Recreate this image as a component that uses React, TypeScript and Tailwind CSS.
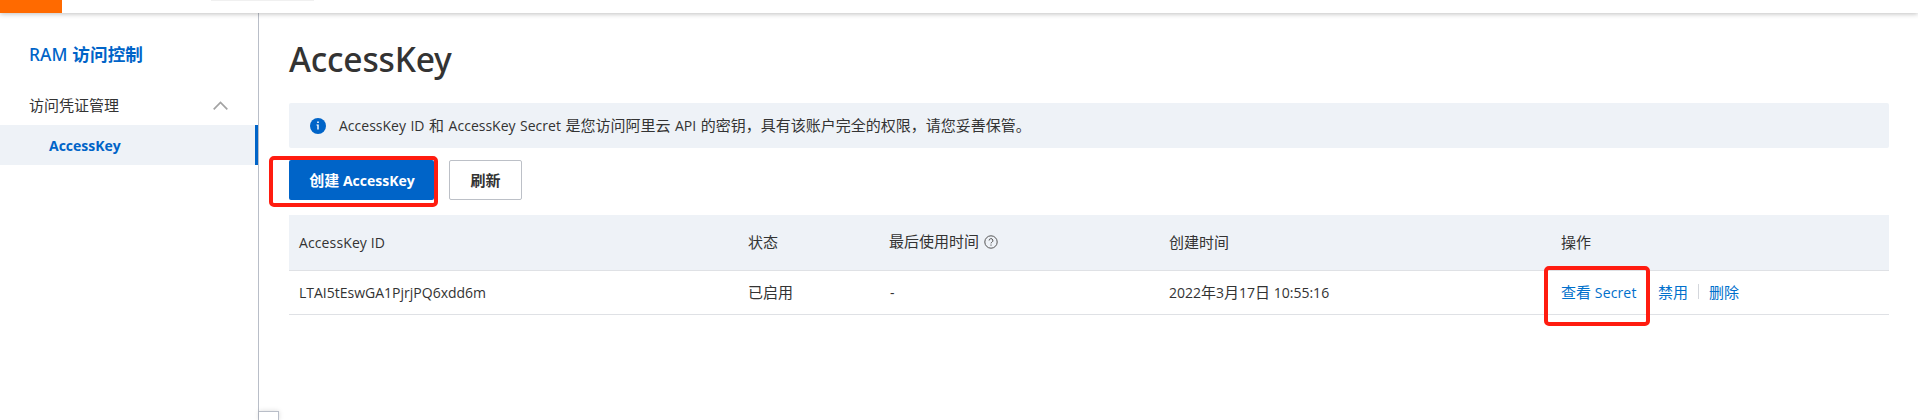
import type { ReactNode } from "react";

function L({
  children,
  className = "text-[14px]",
  family = "font-['Open_Sans','Noto_Sans',sans-serif]",
}: {
  children: ReactNode;
  className?: string;
  family?: string;
}) {
  return <span className={`${family} leading-none whitespace-pre ${className}`}>{children}</span>;
}

const heading = "font-['Noto_Sans','Open_Sans',sans-serif]";

function Sidebar() {
  return (
    <aside className="w-[259px] shrink-0 border-r border-[#b9bec8]">
      <h2 className="mt-[29px] ml-[29px] flex h-[24px] items-baseline text-[17.6px] leading-[24px] font-bold tracking-[0.1px] text-[#0064c8]">
        <L family={heading} className="text-[17.4px] font-medium">RAM </L>
        <span>访问控制</span>
      </h2>
      <div className="mt-[19px] flex h-[40px] items-center justify-between pr-[30px] pl-[29px]">
        <span>访问凭证管理</span>
        <svg width="15" height="9" viewBox="0 0 15 9" fill="none" stroke="#a3a3a3" strokeWidth="1.7">
          <path d="M0.7 8.3 7.5 1.4l6.8 6.9" />
        </svg>
      </div>
      <div className="flex h-[40px] items-center border-r-[3px] border-[#0064c8] bg-[#eef2f7] pt-[2px] pl-[49px] font-bold text-[#0064c8]">
        <L>AccessKey</L>
      </div>
    </aside>
  );
}

function Table() {
  const row = "grid grid-cols-[449px_141px_280px_392px_1fr] pl-[10px] border-b border-[#dfe1e5] items-center";
  return (
    <div className="mt-[15px]">
      <div className={`${row} h-[56px] bg-[#eef2f7]`}>
        <L className="text-[14px] tracking-[0.12px]">AccessKey ID</L>
        <span className="pb-[2px]">状态</span>
        <span className="flex items-center gap-[5px] pb-[3px]">
          最后使用时间
          <svg className="mt-[2px]" width="14" height="14" viewBox="0 0 14 14" fill="none" stroke="#555" strokeWidth="1">
            <circle cx="7" cy="7" r="6.2" />
            <path d="M5.1 5.5a1.9 1.9 0 1 1 2.8 1.7c-.6.3-.9.6-.9 1.2M7 9.5v1.2" />
          </svg>
        </span>
        <span className="pb-[2px]">创建时间</span>
        <span className="pb-[2px]">操作</span>
      </div>
      <div className={`${row} h-[44px]`}>
        <L>LTAI5tEswGA1PjrjPQ6xdd6m</L>
        <span className="pb-[2px]">已启用</span>
        <L className="pl-px text-[14px]">-</L>
        <span className="pb-[2px]"><L>2022</L>年<L>3</L>月<L>17</L>日<L> 10:55:16</L></span>
        <span className="flex items-center pb-[2px] text-[#0070cc]">
          <span className="relative w-[97px]">
            查看<L className="text-[14px] tracking-[0.15px]"> Secret</L>
            <span className="absolute top-[-15px] left-[-17px] h-[60px] w-[106px] rounded-[5px] border-4 border-[#ff1c10]" />
          </span>
          <span>禁用</span>
          <span className="mx-[10px] h-[15px] w-px bg-[#d4d7dc]" />
          <span>删除</span>
        </span>
      </div>
    </div>
  );
}

export default function App() {
  return (
    <div className="flex h-[420px] w-[1918px] flex-col overflow-hidden bg-white font-['Noto_Sans_CJK_SC',sans-serif] text-[15px] leading-[22px] text-[#333]">
      <header className="relative z-10 flex h-[13px] shrink-0 bg-white shadow-[0_1px_5px_rgba(0,0,0,0.25)]">
        <div className="w-[62px] bg-[#ff6a00]" />
        <div className="ml-[149px] h-px w-[103px] bg-[#f0f0f0]" />
      </header>
      <div className="flex flex-1">
        <Sidebar />
        <div className="flex w-[30px] shrink-0 items-end">
          <div className="h-[9px] w-[20px] border-t border-r border-[#b9bec8] shadow-[0_0_5px_rgba(0,0,0,0.15)]" />
        </div>
        <main className="w-[1600px] pt-[22px]">
          <h1 className="flex h-[50px] items-center font-medium">
            <L family={heading} className="text-[33.6px] font-medium tracking-[-0.2px]">AccessKey</L>
          </h1>
          <div className="mt-[18px] flex h-[45px] items-center rounded-[2px] bg-[#eef2f7] pl-[21px]">
            <svg width="16" height="16" viewBox="0 0 16 16">
              <circle cx="8" cy="8" r="8" fill="#0064c8" />
              <path d="M7.2 3.5h1.6v1.6H7.2zM6.5 6.5h2.2v5H7.3V7.6h-.8z" fill="#fff" />
            </svg>
            <span className="ml-[13px] pb-[2px] whitespace-nowrap [word-spacing:0.9px]">
              <L>AccessKey ID </L>和<L> AccessKey Secret </L>是您访问阿里云<L> API </L>的密钥，具有该账户完全的权限，请您妥善保管。
            </span>
          </div>
          <div className="mt-[12px] flex h-[40px] font-bold">
            <div className="relative flex w-[145px] items-center justify-center rounded-[2px] bg-[#0064c8] pb-px pl-px text-white">
              <span>创建<L> AccessKey</L></span>
              <span className="absolute top-[-4px] left-[-20px] h-[51px] w-[169px] rounded-[5px] border-4 border-[#ff1c10]" />
            </div>
            <div className="ml-[15px] flex w-[73px] items-center justify-center rounded-[2px] border border-[#bcc0c7] pb-px">刷新</div>
          </div>
          <Table />
        </main>
      </div>
    </div>
  );
}
